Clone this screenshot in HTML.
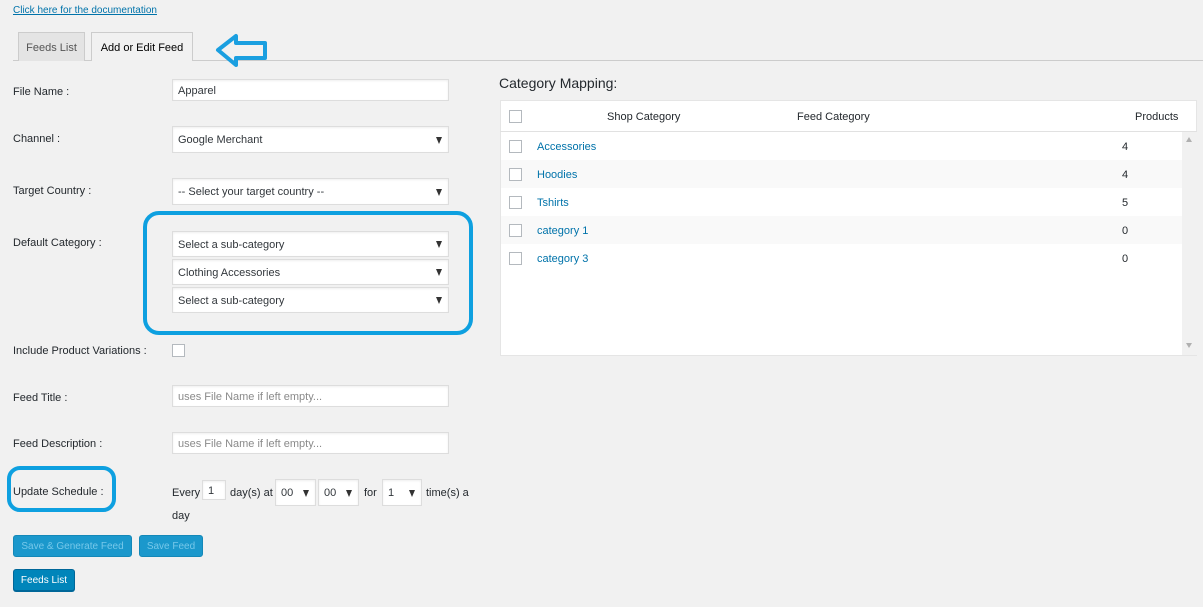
<!DOCTYPE html>
<html><head><meta charset="utf-8"><style>
*{box-sizing:border-box;margin:0;padding:0}
body{width:1203px;height:607px;background:#f1f1f1;font-family:"Liberation Sans",sans-serif;font-size:11px;color:#23282d;position:relative;overflow:hidden}
.a{position:absolute}
.lbl{position:absolute;left:13px;font-size:11px;color:#23282d}
.inp{position:absolute;left:172px;width:277px;background:#fff;border:1px solid #ddd;box-shadow:inset 0 1px 2px rgba(0,0,0,.07);font-size:11px;line-height:13px;color:#32373c;padding-left:5px;padding-top:2px;display:flex;align-items:center}
.ph{color:#8a8a8a}
.sel::after{content:"";position:absolute;right:6px;top:50%;margin-top:-3px;border-left:3.5px solid transparent;border-right:3.5px solid transparent;border-top:7px solid #333}
.btn{position:absolute;height:22px;border-radius:3px;font-size:10px;display:flex;align-items:center;justify-content:center}
.cb{position:absolute;width:13px;height:13px;border:1px solid #b4b9be;background:#fff}
.lnk{color:#0073aa;font-size:11px}
</style></head><body>
<div class="a" style="left:13px;top:5px;font-size:10px;color:#0073aa;text-decoration:underline">Click here for the documentation</div>
<div class="a" style="left:13px;top:60px;width:1190px;height:1px;background:#ccc"></div>
<div class="a" style="left:18px;top:32px;width:67px;height:29px;background:#e4e4e4;border:1px solid #ccc;border-bottom:none;font-size:11px;color:#555;display:flex;align-items:center;justify-content:center;padding-top:2px">Feeds List</div>
<div class="a" style="left:91px;top:32px;width:102px;height:29px;background:#f1f1f1;border:1px solid #ccc;border-bottom:none;font-size:11px;color:#000;display:flex;align-items:center;justify-content:center;padding-top:2px">Add or Edit Feed</div>
<svg class="a" style="left:212px;top:32px" width="60" height="38"><path d="M6 18 L24 4 L24 11 L53 11 L53 26 L24 26 L24 33 Z" fill="none" stroke="#1a9fe0" stroke-width="4" stroke-linejoin="round"/></svg>

<div class="lbl" style="top:86px">File Name :</div>
<div class="inp" style="top:79px;height:22px">Apparel</div>
<div class="lbl" style="top:133px">Channel :</div>
<div class="inp sel" style="top:126px;height:27px">Google Merchant</div>
<div class="lbl" style="top:185px">Target Country :</div>
<div class="inp sel" style="top:178px;height:27px">-- Select your target country --</div>
<div class="lbl" style="top:237px">Default Category :</div>
<div class="inp sel" style="top:231px;height:26px">Select a sub-category</div>
<div class="inp sel" style="top:259px;height:26px">Clothing Accessories</div>
<div class="inp sel" style="top:287px;height:26px">Select a sub-category</div>
<div class="a" style="left:143px;top:211px;width:330px;height:124px;border:4px solid #0ea0e0;border-radius:16px"></div>
<div class="lbl" style="top:345px">Include Product Variations :</div>
<div class="cb" style="left:172px;top:344px"></div>
<div class="lbl" style="top:392px">Feed Title :</div>
<div class="inp ph" style="top:385px;height:22px">uses File Name if left empty...</div>
<div class="lbl" style="top:438px">Feed Description :</div>
<div class="inp ph" style="top:432px;height:22px">uses File Name if left empty...</div>
<div class="a" style="left:7px;top:466px;width:109px;height:46px;border:4px solid #0ea0e0;border-radius:13px"></div>
<div class="lbl" style="top:486px">Update Schedule :</div>
<div class="a" style="left:172px;top:487px">Every</div>
<div class="inp" style="left:202px;top:480px;width:24px;height:20px">1</div>
<div class="a" style="left:230px;top:487px">day(s) at</div>
<div class="inp sel" style="left:275px;top:479px;width:41px;height:27px">00</div>
<div class="inp sel" style="left:318px;top:479px;width:41px;height:27px">00</div>
<div class="a" style="left:364px;top:487px">for</div>
<div class="inp sel" style="left:382px;top:479px;width:40px;height:27px">1</div>
<div class="a" style="left:426px;top:487px">time(s) a</div>
<div class="a" style="left:172px;top:510px">day</div>
<div class="btn" style="left:13px;top:535px;width:119px;background:#1b98cc;color:#76c8ea;border:1px solid #1488b8">Save &amp; Generate Feed</div>
<div class="btn" style="left:139px;top:535px;width:64px;background:#1b98cc;color:#76c8ea;border:1px solid #1488b8">Save Feed</div>
<div class="btn" style="left:13px;top:569px;width:62px;background:#0085ba;color:#fff;border:1px solid #006799;box-shadow:0 1px 0 #006799">Feeds List</div>

<div class="a" style="left:499px;top:75px;font-size:14px;color:#23282d">Category Mapping:</div>
<div class="a" style="left:500px;top:100px;width:697px;height:256px;background:#fff;border:1px solid #e5e5e5"></div>
<div class="a" style="left:500px;top:131px;width:697px;height:1px;background:#e1e1e1"></div>
<div class="cb" style="left:509px;top:110px"></div>
<div class="a" style="left:607px;top:111px">Shop Category</div>
<div class="a" style="left:797px;top:111px">Feed Category</div>
<div class="a" style="left:1135px;top:111px">Products</div>
<div class="a" style="left:1182px;top:132px;width:15px;height:223px;background:#f1f1f1"></div>
<div class="a" style="left:1186px;top:137px;border-left:3.5px solid transparent;border-right:3.5px solid transparent;border-bottom:5px solid #b0b0b0"></div>
<div class="a" style="left:1186px;top:343px;border-left:3.5px solid transparent;border-right:3.5px solid transparent;border-top:5px solid #b0b0b0"></div>
<div class="a" style="left:501px;top:160px;width:681px;height:28px;background:#f9f9f9"></div>
<div class="a" style="left:501px;top:216px;width:681px;height:28px;background:#f9f9f9"></div>
<div class="cb" style="left:509px;top:140px"></div><div class="a lnk" style="left:537px;top:141px">Accessories</div><div class="a" style="left:1122px;top:141px">4</div>
<div class="cb" style="left:509px;top:168px"></div><div class="a lnk" style="left:537px;top:169px">Hoodies</div><div class="a" style="left:1122px;top:169px">4</div>
<div class="cb" style="left:509px;top:196px"></div><div class="a lnk" style="left:537px;top:197px">Tshirts</div><div class="a" style="left:1122px;top:197px">5</div>
<div class="cb" style="left:509px;top:224px"></div><div class="a lnk" style="left:537px;top:225px">category 1</div><div class="a" style="left:1122px;top:225px">0</div>
<div class="cb" style="left:509px;top:252px"></div><div class="a lnk" style="left:537px;top:253px">category 3</div><div class="a" style="left:1122px;top:253px">0</div>
</body></html>
